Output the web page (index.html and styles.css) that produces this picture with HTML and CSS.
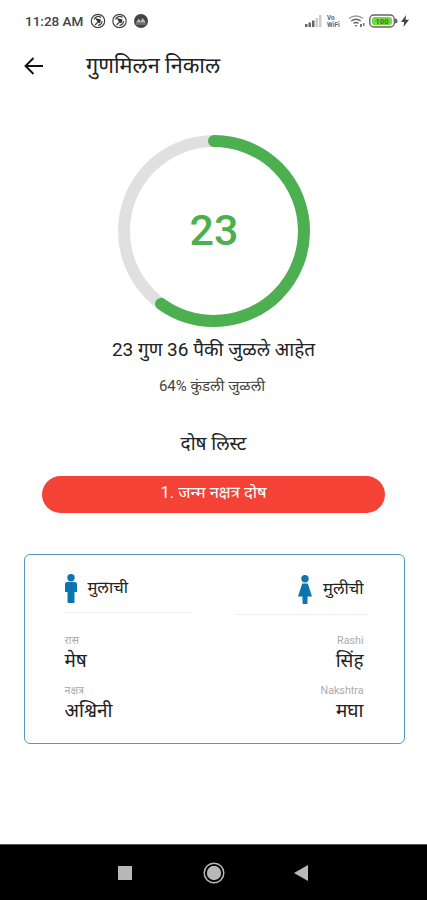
FILE: index.html
```html
<!DOCTYPE html>
<html lang="mr">
<head>
<meta charset="utf-8">
<title>गुणमिलन निकाल</title>
<link rel="stylesheet" href="styles.css">
</head>
<body>
<div class="screen">
  <header class="status">
    <span class="clock">11:28 AM</span>
    <svg class="notices" width="60" height="16" viewBox="0 0 60 16">
      <g fill="none" stroke="#444" stroke-width="1.2">
        <circle cx="8" cy="8" r="6.7"/><path d="M4 6.5a4.4 4.4 0 0 1 7-2M12 8a4.4 4.4 0 0 1-4 4.3M5 12l3-3" />
        <circle cx="29.500" cy="8" r="6.700"/><path d="M25.500 6.500a4.400 4.400 0 0 1 7-2M33.500 8a4.400 4.400 0 0 1-4 4.300M26.500 12l3-3"/>
      </g>
      <path d="M5 5l6 1.500-1 4-2-1zM26.500 5l6 1.500-1 4-2-1z" fill="#333"/>
      <circle cx="51" cy="8" r="7" fill="#444"/>
      <path d="M46 9.500l3-4 1.500 3 2-3.500 3.500 4.500z" fill="#bbb"/><path d="M46 11h10" stroke="#999"/>
    </svg>
    <span class="gap"></span>
    <svg class="signal" width="17" height="12" viewBox="0 0 17 12">
      <path d="M0 9h2.500v3H0zM3.500 7.500H6V12H3.500zM7 5.500h2.500V12H7z" fill="#666"/>
      <path d="M10.500 3H13v9h-2.500zM14 0h2.500v12H14z" fill="#ccc"/>
    </svg>
    <span class="vo"><span>Vo</span><span>WiFi</span></span>
    <svg class="wifi" width="18" height="14" viewBox="0 0 18 14">
      <g fill="none" stroke="#666" stroke-width="1.500"><path d="M1 4.500a11 11 0 0 1 14 0" stroke="#999"/><path d="M3.200 7a8 8 0 0 1 9.600 0"/><path d="M5.500 9.300a4.500 4.500 0 0 1 5 0"/></g>
      <path d="M6.500 11h3L8 13zM12 10h2v3h-2zM15 9h1.500v3H15z" fill="#777"/>
    </svg>
    <svg class="battery" width="29" height="14" viewBox="0 0 29 14">
      <rect x=".8" y="1" width="24.500" height="12" rx="4" fill="#fff" stroke="#666" stroke-width="1.400"/>
      <path d="M26 4.500q2.500 0 2.500 2.500T26 9.500z" fill="#666"/>
      <rect x="3" y="3" width="20" height="8" rx="2.500" fill="#72d83c"/>
      <text x="13" y="9.700" text-anchor="middle" font-size="7.500" font-weight="700" fill="#397a20">100</text>
    </svg>
    <svg class="bolt" width="8" height="12" viewBox="0 0 8 12"><path d="M5 0L0 7h3.200L2.500 12 8 4.800H4.600z" fill="#444"/></svg>
  </header>

  <nav class="appbar">
    <svg width="20" height="18" viewBox="0 0 20 18"><path d="M9.500 1L1.500 9l8 8M1.500 9H19" fill="none" stroke="#111" stroke-width="1.900"/></svg>
    <h1>गुणमिलन निकाल</h1>
  </nav>

  <main>
    <div class="ring">
      <svg width="192" height="192" viewBox="0 0 192 192">
        <circle cx="96" cy="96" r="90" fill="none" stroke="#e0e0e0" stroke-width="12"/>
        <circle cx="96" cy="96" r="90" fill="none" stroke="#4caf50" stroke-width="12" stroke-linecap="round" pathLength="100" stroke-dasharray="60 100" transform="rotate(-90 96 96)"/>
      </svg>
      <span class="score">23</span>
    </div>
    <p class="summary">23 गुण 36 पैकी जुळले आहेत</p>
    <p class="percent">64% कुंडली जुळली</p>
    <h2>दोष लिस्ट</h2>
    <div class="dosh">1. जन्म नक्षत्र दोष</div>

    <section class="card">
      <div class="person boy">
        <div class="who">
          <svg width="12" height="29" viewBox="0 0 12 29" fill="#0c75b0"><circle cx="6" cy="3.700" r="3.700"/><path d="M2.200 8h7.600Q12 8 12 10.200V18H9.500v10q0 1-1 1h-5q-1 0-1-1V18H0v-7.800Q0 8 2.200 8z"/></svg>
          <span>मुलाची</span>
        </div>
        <div class="label">रास</div>
        <div class="value">मेष</div>
        <div class="label second">नक्षत्र</div>
        <div class="value">अश्विनी</div>
      </div>
      <div class="person girl">
        <div class="who">
          <svg width="14" height="29" viewBox="0 0 14 29" fill="#0c75b0"><circle cx="7" cy="3.700" r="3.700"/><path d="M4.200 8.500h5.600L14 21.500H9.500V28q0 1-1 1h-3q-1 0-1-1v-6.500H0z"/></svg>
          <span>मुलीची</span>
        </div>
        <div class="label">Rashi</div>
        <div class="value">सिंह</div>
        <div class="label second">Nakshtra</div>
        <div class="value">मघा</div>
      </div>
    </section>
  </main>

  <footer class="keys">
    <svg width="14" height="14" viewBox="0 0 14 14"><path d="M0 0h14v14H0z" fill="#b8b8b8"/></svg>
    <svg width="22" height="22" viewBox="0 0 22 22"><circle cx="11" cy="11" r="9.800" fill="none" stroke="#b8b8b8" stroke-width="1.500"/><circle cx="11" cy="11" r="7.200" fill="#b8b8b8"/></svg>
    <svg width="14" height="16" viewBox="0 0 14 16"><path d="M0 8L14 0v16z" fill="#b8b8b8"/></svg>
  </footer>
</div>
</body>
</html>
```
FILE: styles.css
```css
* { box-sizing: border-box; }
body, h1, h2, p { margin: 0; font-weight: 400; }
body { background: #fff; font-family: Roboto, "Noto Sans Devanagari", "Noto Sans", sans-serif; color: #222; }
svg { display: block; flex: none; }
.screen { width: 427px; height: 900px; display: flex; flex-direction: column; overflow: hidden; }

.status { height: 42px; padding: 0 18px 0 25px; display: flex; align-items: center; color: #444; }
.clock { width: 65px; font-size: 13.5px; font-weight: 500; white-space: nowrap; }
.gap { flex: 1; }
.signal { margin-right: 5px; }
.vo { width: 17px; margin-right: 4px; display: flex; flex-direction: column; gap: 1px; font-size: 6.5px; line-height: 6px; font-weight: 700; color: #666; }
.wifi { margin-right: 3px; }
.battery { margin-right: 3px; }

.appbar { height: 48px; padding-left: 24px; display: flex; align-items: center; gap: 42px; }
.appbar h1 { font-size: 21.7px; line-height: 48px; white-space: nowrap; }

main { flex: 1; padding: 45px 23px 0; display: flex; flex-direction: column; align-items: center; text-align: center; white-space: nowrap; }
.ring { display: grid; place-items: center; height: 192px; }
.ring > * { grid-area: 1 / 1; }
.score { padding: 0 0 2px 1px; font-size: 43px; line-height: 50px; font-weight: 500; color: #4caf50; }
.summary { height: 46px; font-size: 19px; line-height: 46px; }
.percent { height: 26px; padding-right: 3px; font-size: 15px; line-height: 26px; color: #444; }
h2 { height: 77px; padding-top: 25px; font-size: 19px; line-height: 40px; }
.dosh { width: 343px; height: 37px; border-radius: 19px; background: #f44336; color: #fff; font-size: 16.500px; line-height: 34px; }

.card { width: 381px; height: 190px; margin: 41px 0 0 1px; padding: 0 37px 0 40px; border: 1.500px solid #5598bd; border-radius: 6px; display: flex; justify-content: space-between; }
.person { width: 131px; display: flex; flex-direction: column; }
.who { height: 58px; padding-top: 9px; border-bottom: 1px solid #eee; display: flex; align-items: center; gap: 11px; font-size: 16.500px; line-height: 26px; }
.who span { padding-bottom: 1px; }
.boy { width: 128px; text-align: left; }
.girl { text-align: right; padding-right: 3px; }
.girl .who { height: 60px; margin-right: -3px; padding-right: 3px; justify-content: flex-end; }
.label { height: 14px; margin-top: 21px; font-size: 10.700px; line-height: 14px; color: #aaa; }
.girl .label { margin-top: 19px; }
.value { height: 25px; font-size: 19px; line-height: 26px; }
.person .second { margin-top: 11px; }

.keys { height: 56px; background: #000; border-top: 1px solid #555; padding-left: 118px; display: flex; align-items: center; gap: 78px; }
.keys svg:nth-child(2) { margin-left: -7px; }
.keys svg:nth-child(3) { margin-left: -9px; }
```
